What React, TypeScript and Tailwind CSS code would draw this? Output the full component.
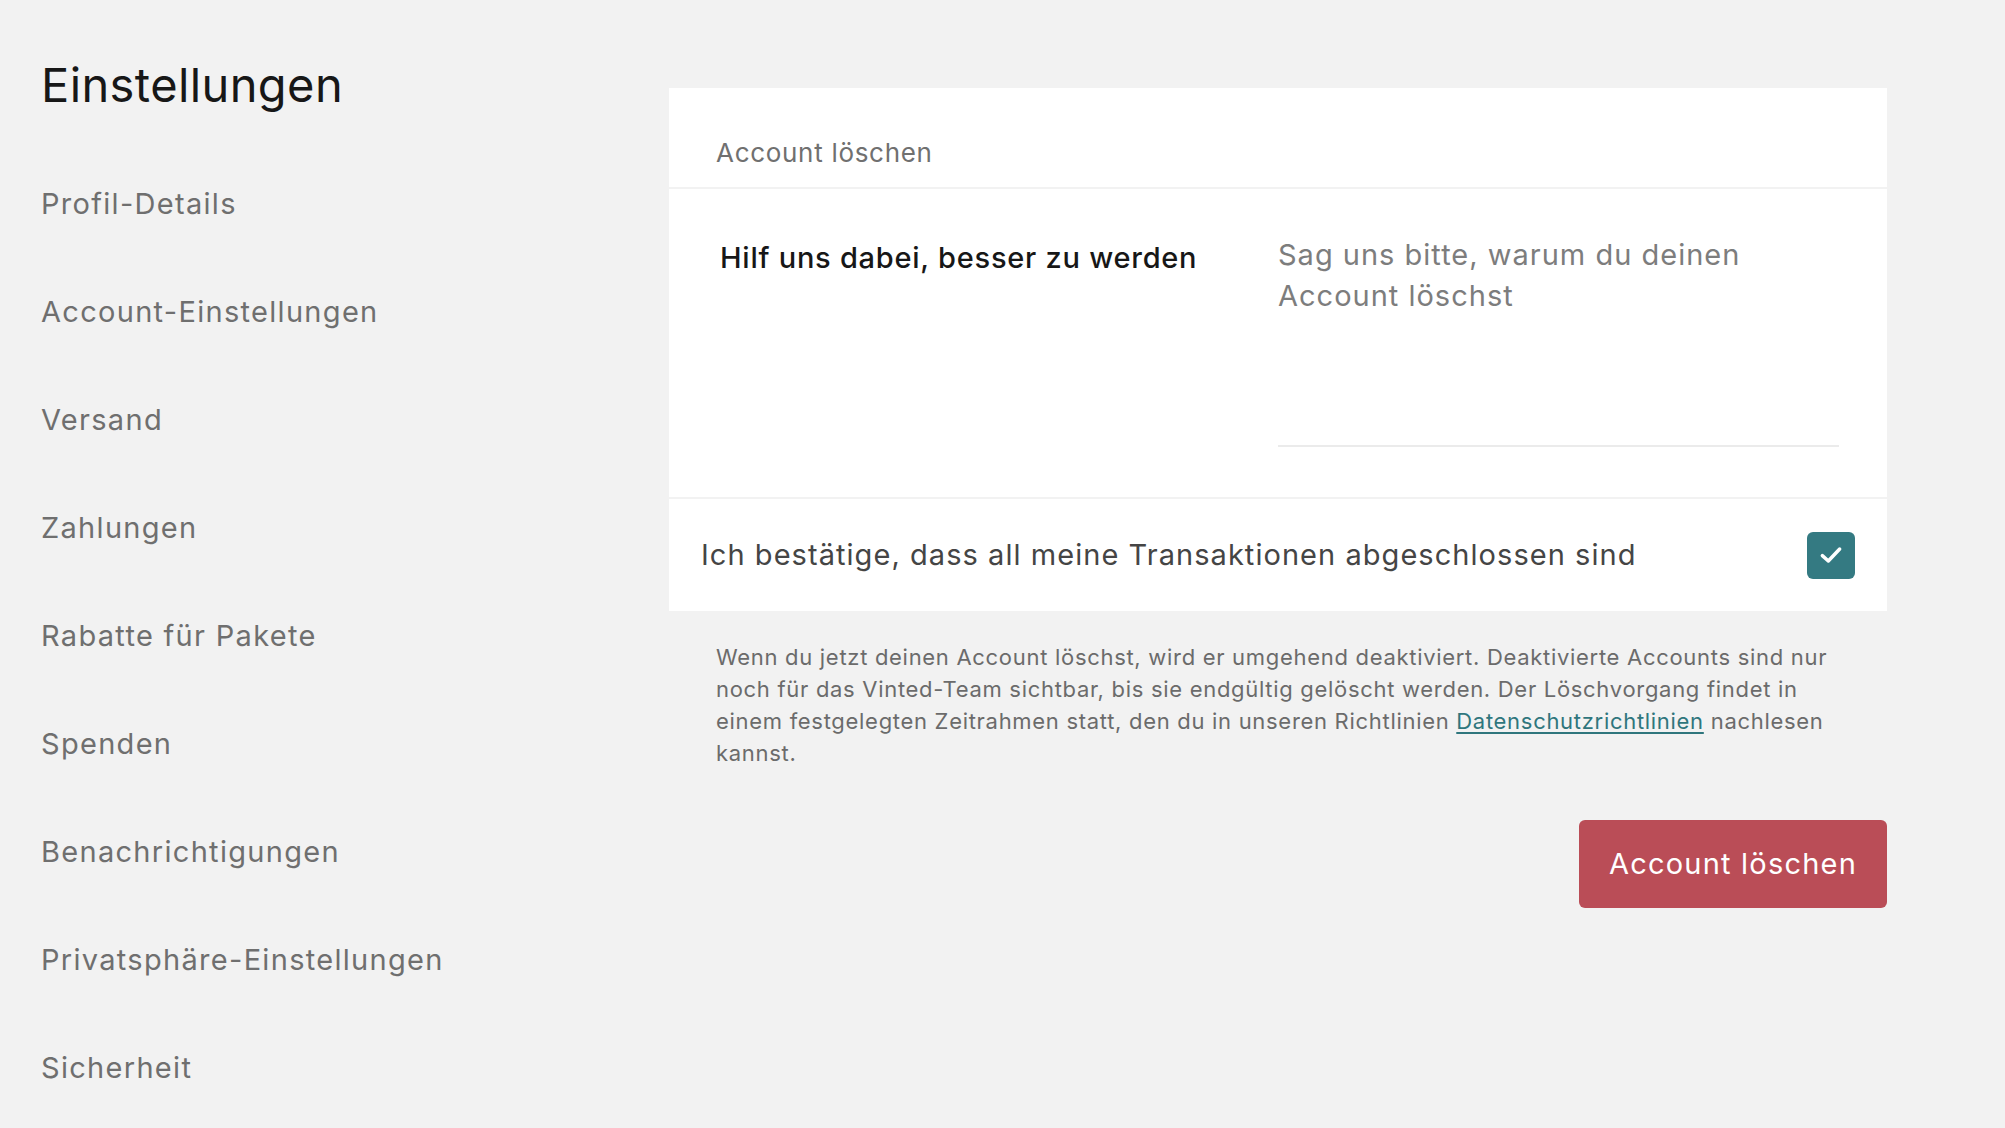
import { useState } from 'react';

const NAV = [
  'Profil-Details',
  'Account-Einstellungen',
  'Versand',
  'Zahlungen',
  'Rabatte für Pakete',
  'Spenden',
  'Benachrichtigungen',
  'Privatsphäre-Einstellungen',
  'Sicherheit',
];

export default function App() {
  const [reason, setReason] = useState('');
  const [confirmed, setConfirmed] = useState(true);

  return (
    <div className="min-h-screen w-full bg-[#f2f2f2] font-['Inter','Noto_Sans',sans-serif] flex">
      {/* Sidebar */}
      <aside className="w-[669px] shrink-0 pl-[41px] pt-[57px]">
        <h1 className="text-[47px] leading-[56px] text-[#171717] font-normal tracking-[0.4px]">Einstellungen</h1>
        <nav className="mt-[73px] flex flex-col gap-[72px]">
          {NAV.map(item => (
            <a key={item} href="#" className="text-[29px] leading-[36px] text-[#6f6f6f] tracking-[1.3px]">
              {item}
            </a>
          ))}
        </nav>
      </aside>

      {/* Main */}
      <main className="w-[1218px] shrink-0 pt-[88px]">
        <div className="flex flex-col gap-[2px]">
          {/* Card header */}
          <div className="h-[99px] bg-white px-[47px] pt-[49px]">
            <h2 className="text-[26px] leading-[32px] text-[#707070] tracking-[0.7px]">Account löschen</h2>
          </div>

          {/* Reason */}
          <div className="bg-white px-[48px] pt-[45px] pb-[50px] grid grid-cols-2">
            <p className="pt-[3px] pl-[3px] text-[29px] leading-[41px] font-medium text-[#171717] tracking-[0.75px]">
              Hilf uns dabei, besser zu werden
            </p>
            <textarea
              value={reason}
              onChange={e => setReason(e.target.value)}
              placeholder="Sag uns bitte, warum du deinen Account löschst"
              className="h-[213px] w-full resize-none border-b-2 border-[#ebebeb] bg-transparent text-[29px] leading-[41px] tracking-[1px] text-[#171717] placeholder:text-[#7d7d7d] outline-none"
            />
          </div>

          {/* Confirmation */}
          <label className="h-[112px] bg-white px-[32px] flex items-center justify-between cursor-pointer">
            <span className="text-[29px] leading-[40px] text-[#454545] tracking-[1.05px]">
              Ich bestätige, dass all meine Transaktionen abgeschlossen sind
            </span>
            <button
              type="button"
              onClick={() => setConfirmed(!confirmed)}
              className={`w-[48px] h-[47px] rounded-[6px] flex items-center justify-center ${confirmed ? 'bg-[#347a82]' : 'bg-white border-2 border-[#cccccc]'}`}
            >
              {confirmed && (
                <svg width="32" height="32" viewBox="0 0 24 24" fill="none" stroke="white" strokeWidth="2.6" strokeLinecap="round" strokeLinejoin="round">
                  <polyline points="5.5 12.5 10 16.5 18.5 7.5" />
                </svg>
              )}
            </button>
          </label>
        </div>

        {/* Info text */}
        <p className="mt-[30px] px-[47px] text-[22px] leading-[32px] text-[#6b6b6b] tracking-[0.7px]">
          Wenn du jetzt deinen Account löschst, wird er umgehend deaktiviert. Deaktivierte Accounts sind nur noch für das Vinted-Team sichtbar, bis sie endgültig gelöscht werden. Der Löschvorgang findet in einem festgelegten Zeitrahmen statt, den du in unseren Richtlinien{' '}
          <a href="#" className="text-[#2f767d] underline underline-offset-[3px]">Datenschutzrichtlinien</a>{' '}
          nachlesen kannst.
        </p>

        <div className="mt-[51px] flex justify-end">
          <button className="h-[88px] w-[308px] rounded-[6px] bg-[#ba4d57] text-white text-[29px] leading-[36px] tracking-[1.2px]">
            Account löschen
          </button>
        </div>
      </main>
    </div>
  );
}
